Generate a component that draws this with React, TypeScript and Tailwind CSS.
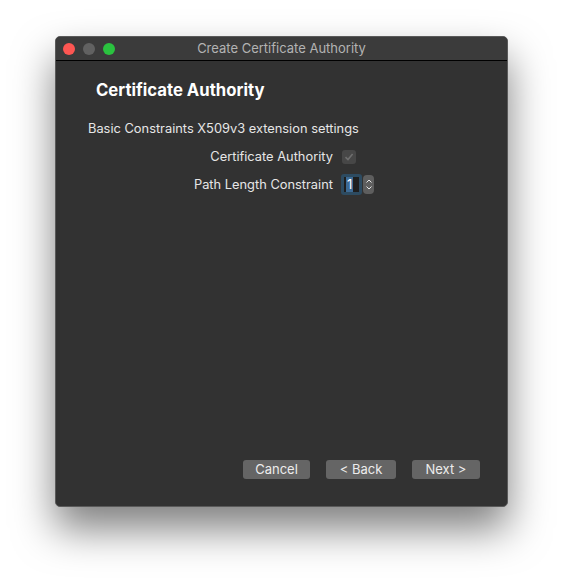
export default function App() {
  return (
    <div className="w-[563px] h-[581px] bg-white pt-[36px] pl-[55px] font-['Inter',sans-serif]">
      <div className="w-[453px] h-[471px] rounded-[5px] bg-[#323232] border border-[#5a5a5a] shadow-[0_22px_40px_rgba(0,0,0,0.5)] flex flex-col overflow-hidden">
        {/* Title bar */}
        <div className="h-[24px] shrink-0 bg-[#3b3b3b] border-b border-black flex items-center px-[7px] relative">
          <div className="flex gap-[8px]">
            <span className="w-[12px] h-[12px] rounded-full bg-[#fd5652]" />
            <span className="w-[12px] h-[12px] rounded-full bg-[#616161]" />
            <span className="w-[12px] h-[12px] rounded-full bg-[#2ac23f]" />
          </div>
          <div className="absolute inset-0 flex items-center justify-center text-[13px] text-[#b3b3b3]">
            Create Certificate Authority
          </div>
        </div>

        {/* Body */}
        <div className="flex-1 flex flex-col pl-[32px] pr-[27px] pt-[18px] pb-[27px]">
          <div className="pl-[8px] text-[16.7px] font-bold text-white leading-[22px]">
            Certificate Authority
          </div>
          <div className="mt-[20px] text-[12.85px] text-[#e6e6e6] leading-[16px]">
            Basic Constraints X509v3 extension settings
          </div>

          <div className="mt-[10px] grid grid-cols-[245px_auto] gap-x-[8px] gap-y-[8px] items-center text-[12.85px] text-[#e6e6e6]">
            <div className="text-right leading-[19px]">Certificate Authority</div>
            <div className="w-[14px] h-[14px] rounded-[3px] bg-[#474747] flex items-center justify-center ml-px">
              <svg width="10" height="10" viewBox="0 0 10 10">
                <path d="M1.5 5.2 L4 7.6 L8.6 2" fill="none" stroke="#6e6e6e" strokeWidth="1.6" />
              </svg>
            </div>
            <div className="text-right leading-[19px]">Path Length Constraint</div>
            <div className="flex items-center gap-[1px]">
              <div className="w-[21px] h-[21px] rounded-[3px] border-[3px] border-[#2d4b61] bg-[#1e1e1e] flex items-center pl-[2px]">
                <span className="bg-[#3d6a94] text-white text-[13px] leading-[15px] px-[1px]">1</span>
              </div>
              <div className="w-[11px] h-[19px] rounded-[4px] bg-[#5e5e5e] flex flex-col items-center justify-center gap-[3px]">
                <svg width="6" height="4" viewBox="0 0 6 4">
                  <path d="M0.5 3.5 L3 1 L5.5 3.5" fill="none" stroke="#e6e6e6" strokeWidth="1" />
                </svg>
                <svg width="6" height="4" viewBox="0 0 6 4">
                  <path d="M0.5 0.5 L3 3 L5.5 0.5" fill="none" stroke="#e6e6e6" strokeWidth="1" />
                </svg>
              </div>
            </div>
          </div>

          <div className="mt-auto flex justify-end gap-[16px]">
            <button className="w-[67px] h-[19px] rounded-[3px] bg-[#656565] text-[13px] text-[#ececec] leading-[19px]">
              Cancel
            </button>
            <button className="w-[70px] h-[19px] rounded-[3px] bg-[#656565] text-[13px] text-[#ececec] leading-[19px]">
              &lt; Back
            </button>
            <button className="w-[68px] h-[19px] rounded-[3px] bg-[#656565] text-[13px] text-[#ececec] leading-[19px]">
              Next &gt;
            </button>
          </div>
        </div>
      </div>
    </div>
  );
}
